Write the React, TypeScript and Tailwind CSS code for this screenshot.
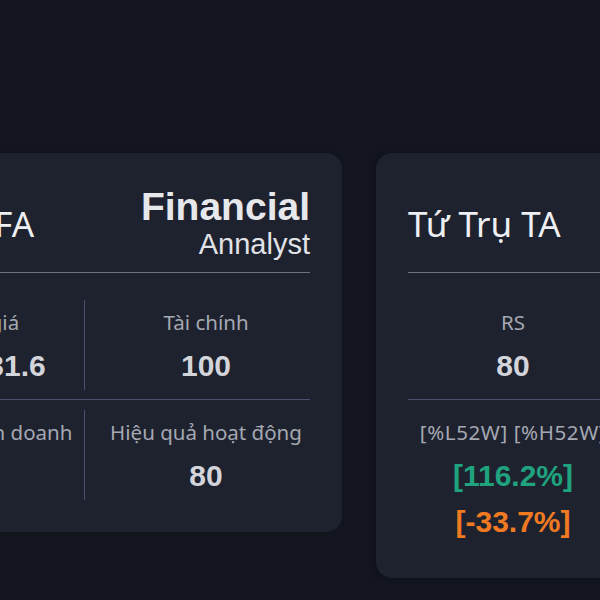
const label = "font-['Noto_Sans',sans-serif] text-[20.5px] leading-[28px] text-[#a5a8b2]";
const value = "font-['Liberation_Sans',Arial,sans-serif] font-bold text-[30px] leading-[32px] text-[#d3d5db]";

function Cell({
  title,
  children,
  left,
  extra = "",
}: {
  title: string;
  children: React.ReactNode;
  left?: boolean;
  extra?: string;
}) {
  return (
    <div
      className={
        left
          ? "w-[211px] border-r border-[#4a4f72] py-2 flex flex-col items-center text-center"
          : "w-[225px] pl-[17px] py-2 flex flex-col items-center text-center"
      }
    >
      <div className={`${label} whitespace-nowrap mb-[14px] ${extra}`}>{title}</div>
      {children}
    </div>
  );
}

function Card({
  header,
  rows,
}: {
  header: React.ReactNode;
  rows: [React.ReactNode, React.ReactNode][];
}) {
  return (
    <div className="w-[500px] shrink-0 rounded-2xl bg-[#1e222f] px-8 pt-8 pb-8 shadow-[-4px_0_8px_rgba(0,0,0,0.25)]">
      <div className="h-[74px] flex items-center justify-between mb-[13px]">{header}</div>
      <div className="h-px bg-[#6e727e]" />
      <div className="mt-[27px] flex">{rows[0]}</div>
      <div className="mt-[9px] h-px bg-[#4a4f72]" />
      <div className="mt-[10px] flex">{rows[1]}</div>
    </div>
  );
}

export default function App() {
  const title = "font-['Noto_Sans',sans-serif] text-[35px] leading-[44px] text-[#eeeff2] mt-[4px] whitespace-nowrap";
  return (
    <div className="w-[600px] h-[600px] overflow-hidden bg-[#131620]">
      <div className="flex items-start gap-[34px] ml-[-158px] pt-[153px]">
        <Card
          header={
            <>
              <div className={`${title} ml-[7px]`}>Tứ Trụ FA</div>
              <div className="flex flex-col items-end">
                <div className="font-['Liberation_Sans',Arial,sans-serif] font-bold text-[39px] leading-[44px] text-[#e7e8ec]">
                  Financial
                </div>
                <div className="font-['Liberation_Sans',Arial,sans-serif] text-[29px] leading-[30px] text-[#e1e3e7]">
                  Annalyst
                </div>
              </div>
            </>
          }
          rows={[
            [
              <Cell key="a" left title="Định giá">
                <div className={value}>100 / 31.6</div>
              </Cell>,
              <Cell key="b" title="Tài chính">
                <div className={value}>100</div>
              </Cell>,
            ],
            [
              <Cell key="c" left title="Hiệu quả kinh doanh" extra="mr-[14px]">
                <div className={value}>90</div>
              </Cell>,
              <Cell key="d" title="Hiệu quả hoạt động">
                <div className={value}>80</div>
              </Cell>,
            ],
          ]}
        />
        <Card
          header={<div className={title}>Tứ Trụ TA</div>}
          rows={[
            [
              <Cell key="a" left title="RS">
                <div className={value}>80</div>
              </Cell>,
              <Cell key="b" title="MA">
                <div className={value}>60</div>
              </Cell>,
            ],
            [
              <Cell key="c" left title="[%L52W] [%H52W]" extra="tracking-[0.6px]">
                <div className={`${value} !text-[#1fa37f]`}>[116.2%]</div>
                <div className={`${value} !text-[#ef7a22] mt-[14px]`}>[-33.7%]</div>
              </Cell>,
              <Cell key="d" title="Xu hướng">
                <div className={value}>Tăng</div>
              </Cell>,
            ],
          ]}
        />
      </div>
    </div>
  );
}
